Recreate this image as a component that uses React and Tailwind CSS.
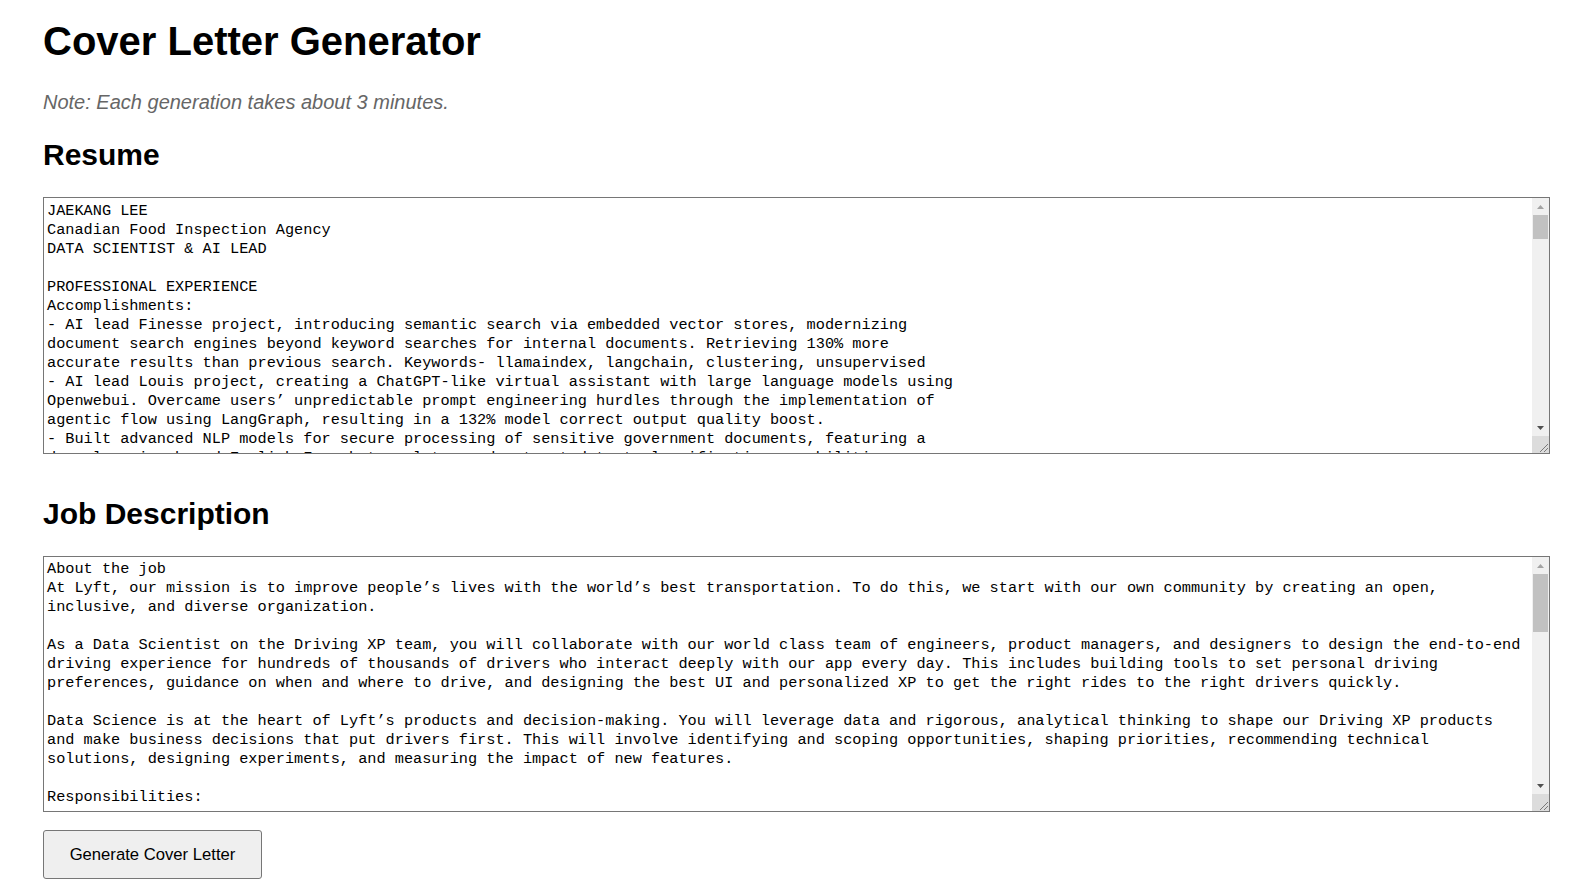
import React, { useLayoutEffect, useRef, useState } from "react";

const resumeText = `JAEKANG LEE
Canadian Food Inspection Agency
DATA SCIENTIST & AI LEAD

PROFESSIONAL EXPERIENCE
Accomplishments:
- AI lead Finesse project, introducing semantic search via embedded vector stores, modernizing
document search engines beyond keyword searches for internal documents. Retrieving 130% more
accurate results than previous search. Keywords- llamaindex, langchain, clustering, unsupervised
- AI lead Louis project, creating a ChatGPT-like virtual assistant with large language models using
Openwebui. Overcame users’ unpredictable prompt engineering hurdles through the implementation of
agentic flow using LangGraph, resulting in a 132% model correct output quality boost.
- Built advanced NLP models for secure processing of sensitive government documents, featuring a
deep learning-based English-French translator and automated text classification capabilities.
Keywords- transformers, fine-tuning, hugging face, named entity recognition
- Designed and deployed data pipelines on Azure for inspection records, reducing manual reporting
time by 60% across regional offices. Keywords- azure data factory, databricks, pyspark
- Developed an image classification model to detect plant pests from field inspection photos,
achieving 94% accuracy on the validation set. Keywords- pytorch, cnn, transfer learning
- Led the migration of legacy SAS reports to Python notebooks and automated dashboards, saving
an estimated 400 analyst hours per year.
- Mentored a team of 4 junior data scientists and co-op students on machine learning best practices,
code review and MLOps.
- Presented AI project results to directors general and senior executives, helping secure funding
for two new AI initiatives.

Statistics Canada
DATA SCIENTIST
Accomplishments:
- Developed time series forecasting models for economic indicators using Python, Prophet and ARIMA,
improving forecast error by 18% compared to the previous baseline.
- Built interactive dashboards in Power BI and Streamlit for senior management decision making.
- Automated data quality checks with PySpark, processing over 20 million records per month.
- Applied record linkage and fuzzy matching techniques to integrate administrative datasets from
multiple federal departments.
- Created a text classification model to code open-ended survey responses into standard
occupation categories, reducing manual coding effort by 45%.
- Collaborated with methodologists to design sampling strategies and imputation methods.

Health Canada
DATA ANALYST
Accomplishments:
- Cleaned and analyzed large survey datasets using SQL, R and Python.
- Produced statistical reports and visualizations for policy teams.
- Built automated Excel and R Markdown reports that replaced weekly manual data pulls.
- Supported the COVID-19 response team with daily case data processing and reporting.

University of Ottawa
RESEARCH ASSISTANT
- Conducted research on graph neural networks for recommendation systems.
- Co-authored two conference papers on deep learning for sequential data.
- Assisted in teaching undergraduate courses in data structures and machine learning.

PROJECTS
- Cover Letter Generator: LLM-powered web app that writes tailored cover letters from a resume and
a job description using LangGraph agents, FastAPI and React.
- RAG Chatbot for Regulations: retrieval augmented generation over 10,000+ regulatory documents
with hybrid search (BM25 + embeddings) and reranking.
- Demand Forecasting: gradient boosting models for retail demand forecasting with feature stores
and automated retraining in Airflow.
- Resume Parser: information extraction pipeline using spaCy and custom NER models.

TECHNICAL SKILLS
Languages: Python, R, SQL, JavaScript, TypeScript, Bash
Machine Learning: scikit-learn, PyTorch, TensorFlow, XGBoost, LightGBM, Hugging Face Transformers
LLM / GenAI: LangChain, LangGraph, LlamaIndex, OpenAI API, RAG, vector databases, prompt engineering,
fine-tuning, evaluation, guardrails, agents
NLP: spaCy, NLTK, sentence-transformers, topic modeling, named entity recognition, translation
Statistics: hypothesis testing, A/B testing, regression, causal inference, time series, Bayesian
methods, survey sampling
Data Engineering: PySpark, Airflow, Azure Data Factory, Databricks, Docker, Kubernetes, Git
Databases: PostgreSQL, SQL Server, MongoDB, Chroma, Pinecone, pgvector, Elasticsearch
Cloud: Azure (ML Studio, OpenAI, Cognitive Search, Functions), AWS (S3, SageMaker, Lambda)
Visualization: Power BI, Tableau, Matplotlib, Seaborn, Plotly, Streamlit, Dash
Web: FastAPI, Flask, React, Node.js

EDUCATION
Master of Science in Computer Science, University of Ottawa
Thesis: Graph neural networks for session-based recommendation
Bachelor of Science in Statistics, Carleton University
Minor in Mathematics, Dean’s Honour List

CERTIFICATIONS
Microsoft Certified: Azure Data Scientist Associate
Microsoft Certified: Azure AI Engineer Associate
Databricks Certified Machine Learning Associate
DeepLearning.AI: Natural Language Processing Specialization
DeepLearning.AI: Generative AI with Large Language Models

PUBLICATIONS
- Lee, J. et al. Session-based recommendation with gated graph networks. Canadian AI Conference.
- Lee, J. et al. Learning representations of sequential user behaviour. Workshop on Deep Learning.

AWARDS
- CFIA Innovation Award for the Finesse semantic search project
- Statistics Canada Excellence Award for data integration work
- Ontario Graduate Scholarship

VOLUNTEER
- Mentor, Ottawa Data Science Meetup
- Volunteer instructor, Python for beginners workshops at the public library
- Judge, university hackathons

LANGUAGES
English (fluent), Korean (native), French (intermediate)

INTERESTS
Open-source contribution, hiking, photography, board games

REFERENCES
Available upon request
`;

const jobText = `About the job
At Lyft, our mission is to improve people’s lives with the world’s best transportation. To do this, we start with our own community by creating an open,
inclusive, and diverse organization.

As a Data Scientist on the Driving XP team, you will collaborate with our world class team of engineers, product managers, and designers to design the end-to-end
driving experience for hundreds of thousands of drivers who interact deeply with our app every day. This includes building tools to set personal driving
preferences, guidance on when and where to drive, and designing the best UI and personalized XP to get the right rides to the right drivers quickly.

Data Science is at the heart of Lyft’s products and decision-making. You will leverage data and rigorous, analytical thinking to shape our Driving XP products
and make business decisions that put drivers first. This will involve identifying and scoping opportunities, shaping priorities, recommending technical
solutions, designing experiments, and measuring the impact of new features.

Responsibilities:

- Partner with Engineers, Product Managers, and Business Partners to frame problems, both mathematically and within the business context
- Perform exploratory data analysis to gain a deeper understanding of the problem
- Design and analyze experiments; communicate results and act on launch decisions
- Develop metrics and dashboards to track the health of the driver experience
- Build models and algorithms that improve how drivers find and accept rides
- Leverage data and analysis to influence product roadmaps and strategy
- Identify new opportunities and translate them into actionable product recommendations

Experience:

- M.S. or Ph.D. in Statistics, Economics, Computer Science, or another quantitative field
- 2+ years of industry experience as a Data Scientist or in a similar role
- Proficiency in SQL and Python
- Strong understanding of statistics and experimentation
- Experience with causal inference and observational studies is a plus
- Passion for solving unstructured and non-standard mathematical problems
- Excellent communication skills and the ability to work cross-functionally
- End-to-end experience with data, including querying, aggregation, analysis, and visualization

Benefits:

- Great medical, dental, and vision insurance options
- Mental health benefits
- Family building benefits
- Child care and pet benefits
- 401(k) plan to help save for your future
- In addition to 12 observed holidays, salaried team members have discretionary paid time off
- 18 weeks of paid parental leave. Biological, adoptive, and foster parents are all eligible
- Subsidized commuter benefits
- Lyft Pink - Lyft team members get an exclusive opportunity to test new benefits of our Ridership Program

Lyft is an equal opportunity employer committed to an inclusive workplace that fosters belonging.
`;

// textarea with a classic-looking scrollbar drawn on top (headless hides the native one)
const TextBox = ({ value, onChange, height, pt }) => {
  let ref = useRef(null);
  let [bar, setBar] = useState({ top: 0, size: 20 });

  const update = () => {
    let el = ref.current;
    if (!el) return;
    // track = inner height minus up arrow, down arrow and resizer corner
    let track = el.offsetHeight - 2 - 17 * 3;
    let size = Math.max(18, Math.round((track * el.clientHeight) / el.scrollHeight));
    let maxScroll = el.scrollHeight - el.clientHeight;
    let top = maxScroll > 0 ? Math.round(((track - size) * el.scrollTop) / maxScroll) : 0;
    setBar({ top, size });
  };

  useLayoutEffect(update, [value]);

  return (
    <div className="relative mt-[27px]">
      <textarea
        ref={ref}
        value={value}
        onChange={onChange}
        onScroll={update}
        spellCheck={false}
        className={`block w-full resize-none overflow-y-auto border border-[#767676] bg-white pl-[3px] pr-[19px] text-[15.25px] leading-[19px] text-black outline-none [scrollbar-width:none] ${height} ${pt}`}
        style={{ fontFamily: '"Liberation Mono", "DejaVu Sans Mono", monospace' }}
      />
      <div className="pointer-events-none absolute top-px right-px bottom-px flex w-[17px] flex-col bg-[#f0f0f0]">
        <div className="flex h-[17px] items-center justify-center">
          <svg width="7" height="4" viewBox="0 0 7 4">
            <polygon points="3.5,0 7,4 0,4" fill={bar.top === 0 ? "#a3a3a3" : "#505050"} />
          </svg>
        </div>
        <div className="relative flex-1">
          <div
            className="absolute right-[1px] left-[1px] bg-[#c1c1c1]"
            style={{ top: bar.top, height: bar.size }}
          />
        </div>
        <div className="flex h-[17px] items-center justify-center">
          <svg width="7" height="4" viewBox="0 0 7 4">
            <polygon points="0,0 7,0 3.5,4" fill="#505050" />
          </svg>
        </div>
        <div className="flex h-[17px] items-end justify-end bg-[#dcdcdc]">
          <svg width="12" height="12" viewBox="0 0 12 12">
            <line x1="11" y1="3" x2="3" y2="11" stroke="#7a7a7a" strokeWidth="1" />
            <line x1="11" y1="7" x2="7" y2="11" stroke="#7a7a7a" strokeWidth="1" />
          </svg>
        </div>
      </div>
    </div>
  );
};

const App = () => {
  let [resume, setResume] = useState(resumeText);
  let [job, setJob] = useState(jobText);

  return (
    <div
      className="min-h-screen bg-white pl-[43px] pr-[28px] text-black"
      style={{ fontFamily: '"Liberation Sans", Arial, sans-serif' }}
    >
      <h1 className="pt-[21px] text-[40px] font-bold leading-none">Cover Letter Generator</h1>
      <p className="mt-[31px] text-[20px] italic leading-none text-[#666666]">
        Note: Each generation takes about 3 minutes.
      </p>
      <h2 className="mt-[28px] text-[30px] font-bold leading-none">Resume</h2>
      <TextBox value={resume} onChange={(e) => setResume(e.target.value)} height="h-[257px]" pt="pt-[4px]" />
      <h2 className="mt-[45px] text-[30px] font-bold leading-none">Job Description</h2>
      <TextBox value={job} onChange={(e) => setJob(e.target.value)} height="h-[256px]" pt="pt-[3px]" />
      <button
        type="button"
        className="mt-[18px] h-[49px] w-[219px] rounded-[3px] border border-[#767676] bg-[#efefef] text-[16.67px] text-black hover:bg-[#e5e5e5]"
      >
        Generate Cover Letter
      </button>
    </div>
  );
};

export default App;
